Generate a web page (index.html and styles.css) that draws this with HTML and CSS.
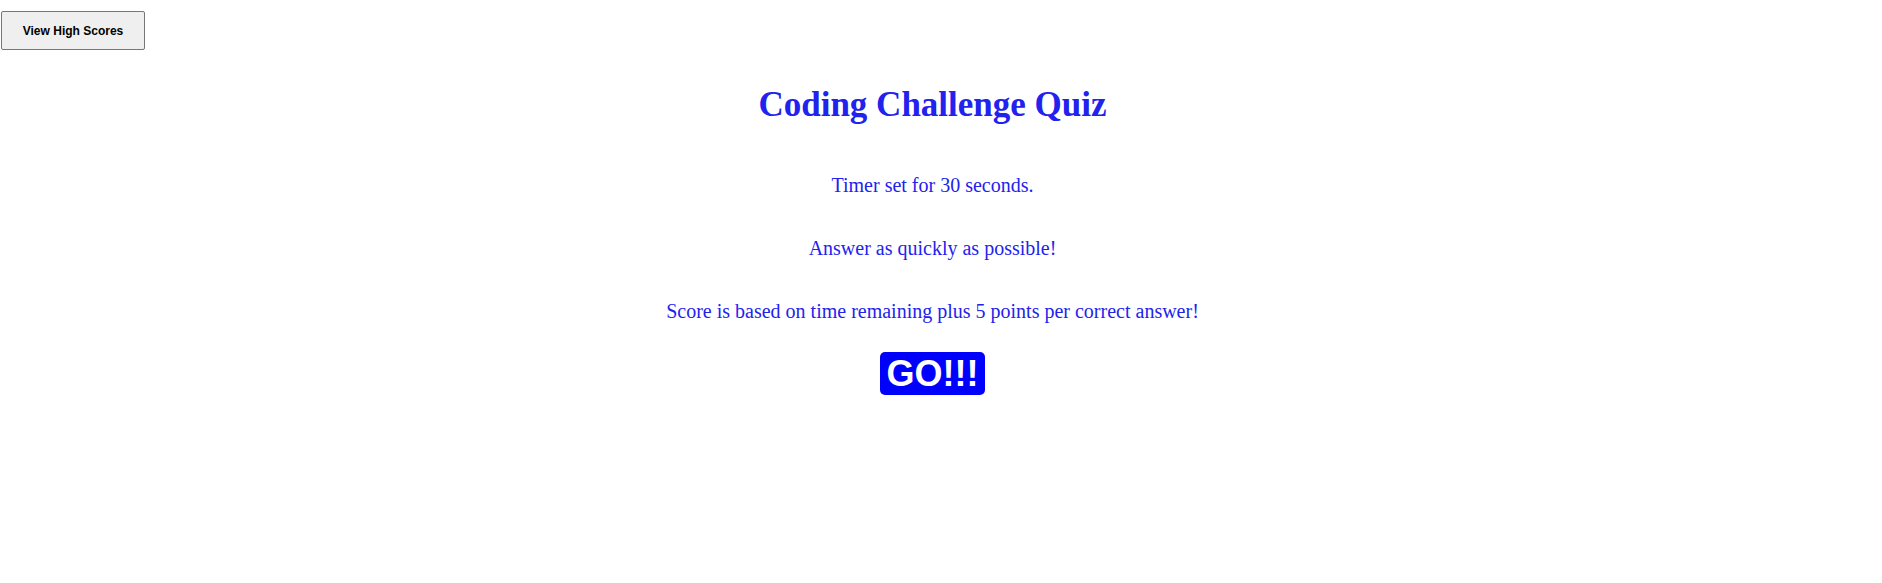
FILE: index.html
```html
<!DOCTYPE html>
<html lang="en">
<head>
<meta charset="utf-8">
<title>Coding Challenge Quiz</title>
<link rel="stylesheet" href="styles.css">
</head>
<body>
<header class="top">
  <button class="scores-btn">View High Scores</button>
</header>
<main class="intro">
  <h1 class="title">Coding Challenge Quiz</h1>
  <p class="line">Timer set for 30 seconds.</p>
  <p class="line">Answer as quickly as possible!</p>
  <p class="line">Score is based on time remaining plus 5 points per correct answer!</p>
  <button class="go-btn">GO!!!</button>
</main>
</body>
</html>
```
FILE: styles.css
```css
html, body {
  margin: 0;
  padding: 0;
  background: #ffffff;
}
body {
  font-family: "Liberation Serif", "Times New Roman", serif;
}
.top {
  padding: 11px 0 0 1px;
}
.scores-btn {
  width: 144px;
  height: 39px;
  font-family: "Liberation Sans", Arial, sans-serif;
  font-size: 12px;
  font-weight: bold;
  color: #000;
  background: #efefef;
  border: 1px solid #767676;
  border-radius: 2px;
  padding: 0;
}
.intro {
  display: flex;
  flex-direction: column;
  align-items: center;
  color: #2222ee;
  padding-right: 17px;
}
.title {
  margin: 34px 0 0;
  font-size: 35px;
  font-weight: bold;
  line-height: 42px;
}
.line {
  margin: 48px 0 0;
  font-size: 20px;
  line-height: 22px;
}
.line + .line {
  margin-top: 41px;
}
.go-btn {
  margin-top: 30px;
  width: 105px;
  height: 43px;
  padding: 0;
  background: #0000ff;
  color: #ffffff;
  border: none;
  border-radius: 5px;
  font-family: "Liberation Sans", Arial, sans-serif;
  font-weight: bold;
  font-size: 36px;
  line-height: 43px;
}
```
